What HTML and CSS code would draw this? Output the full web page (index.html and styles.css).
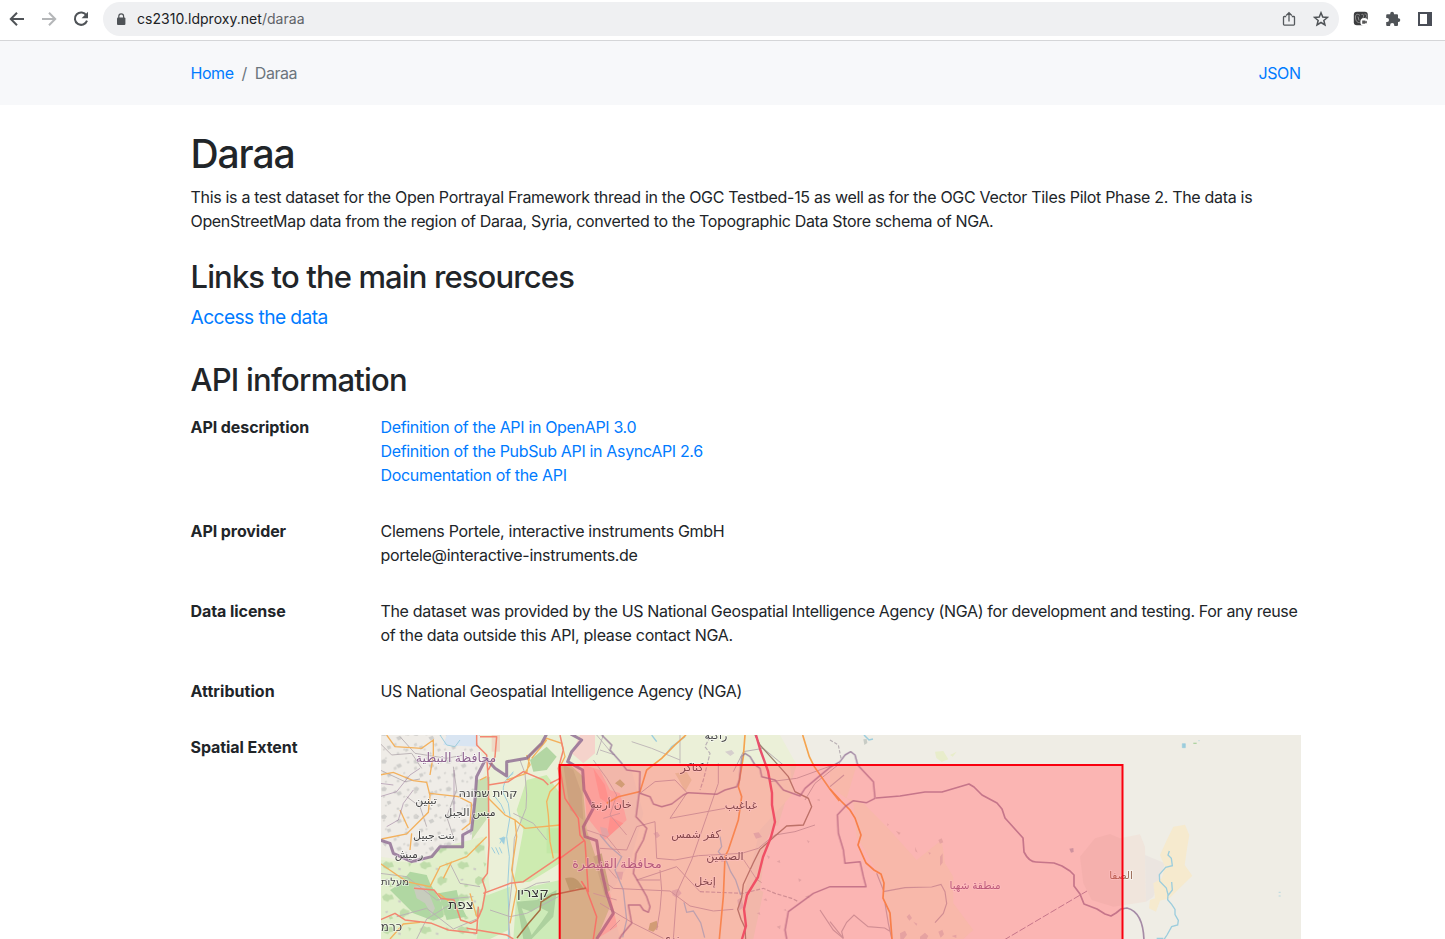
FILE: index.html
```html
<!DOCTYPE html>
<html lang="en">
<head>
<meta charset="utf-8">
<title>Daraa</title>
<link rel="stylesheet" href="styles.css">
</head>
<body>
<div class="toolbar">
  <svg class="icon back" viewBox="0 0 16 16"><path d="M15 8H2M8 1.8 1.8 8 8 14.2" fill="none" stroke="#4f5357" stroke-width="2"/></svg>
  <svg class="icon forward" viewBox="0 0 16 16"><path d="M1 8h13M8 1.8 14.2 8 8 14.2" fill="none" stroke="#b4b6b8" stroke-width="2"/></svg>
  <svg class="icon reload" viewBox="0 0 16 16"><path d="M13.4 4.4A6.2 6.2 0 1 0 14 9.6" fill="none" stroke="#4f5357" stroke-width="2"/><path d="M15 .8v6.4H8.600z" fill="#4f5357"/></svg>
  <div class="omnibox">
    <svg class="lock" viewBox="0 0 10 13"><rect x="1" y="4.600" width="8.400" height="7.400" rx="1" fill="#4f5357"/><path d="M2.800 5V3.300a2.400 2.400 0 0 1 4.800 0V5" fill="none" stroke="#4f5357" stroke-width="1.200"/></svg>
    <span class="url">cs2310.ldproxy.net<span class="path">/daraa</span></span>
    <svg class="icon share" viewBox="0 0 16 16"><path d="M5.200 5.500H3.300q-.8 0-.8.800v7q0 .8.800.8h9.400q.8 0 .8-.8v-7q0-.8-.8-.8h-1.900M8 10.500V2M5.200 4.500 8 1.700l2.800 2.800" fill="none" stroke="#55595d" stroke-width="1.300"/></svg>
    <svg class="icon star" viewBox="0 0 16 16"><path d="m8 1.800 1.750 4.300 4.650.35-3.550 3 1.100 4.500L8 11.500l-3.950 2.450 1.100-4.500-3.550-3 4.650-.35z" fill="none" stroke="#4f5357" stroke-width="1.500"/></svg>
  </div>
  <svg class="icon ext" viewBox="0 0 16 16"><rect x=".8" y=".8" width="14" height="13.400" rx="3" fill="#3c3d3f"/><path d="M7 4.500C5 2.500 2.400 3 2.400 6s1.500 6 4.200 5.500M5 5.500l1 4M8.500 3.500c3-1 2.500 3 .5 4.500m2.500-5c3 0 2.500 2.500 1 4" fill="none" stroke="#999" stroke-width=".9"/><circle cx="11.300" cy="11" r="4" fill="#fff"/><path d="M9.200 9.500h3.200v1l1.400-.7v2.600l-1.400-.7v1H9.200z" fill="#555"/></svg>
  <svg class="icon puzzle" viewBox="0 0 16 16"><path d="M1.200 4.200q0-1 1-1h3V2.700a1.900 1.900 0 0 1 3.800 0v.5h3q1 0 1 1v3h.4a1.900 1.900 0 0 1 0 3.800H13v3q0 1-1 1H9.300v-.8a2.100 2.100 0 0 0-4.200 0v.8H2.200q-1 0-1-1v-2.900H2a2 2 0 0 0 0-4h-.8z" fill="#4f5357"/></svg>
  <svg class="icon panel" viewBox="0 0 16 16"><path d="M1 1h14v14H1zM3 3v10h7V3z" fill="#4a4e57" fill-rule="evenodd"/></svg>
</div>

<nav class="crumbs">
  <div class="trail"><a href="#">Home</a><span class="sep">/</span><span>Daraa</span></div>
  <a href="#" class="json">JSON</a>
</nav>

<main class="content">
  <h1>Daraa</h1>
  <p class="intro"><span class="l1">This is a test dataset for the Open Portrayal Framework thread in the OGC Testbed-15 as well as for the OGC Vector Tiles Pilot Phase 2. The data is</span><br><span class="l2">OpenStreetMap data from the region of Daraa, Syria, converted to the Topographic Data Store schema of NGA.</span></p>
  <h2 class="h-links">Links to the main resources</h2>
  <a href="#" class="access">Access the data</a>
  <h2 class="h-api">API information</h2>
  <dl class="info">
    <dt>API description</dt>
    <dd><a href="#" class="d1">Definition of the API in OpenAPI 3.0</a><br><a href="#" class="d2">Definition of the PubSub API in AsyncAPI 2.6</a><br><a href="#" class="d3">Documentation of the API</a></dd>
    <dt>API provider</dt>
    <dd><span class="p1">Clemens Portele, interactive instruments GmbH</span><br><span class="p2">portele@interactive-instruments.de</span></dd>
    <dt>Data license</dt>
    <dd><span class="c1">The dataset was provided by the US National Geospatial Intelligence Agency (NGA) for development and testing. For any reuse</span><br><span class="c2">of the data outside this API, please contact NGA.</span></dd>
    <dt class="wide">Attribution</dt>
    <dd><span class="a1">US National Geospatial Intelligence Agency (NGA)</span></dd>
    <dt>Spatial Extent</dt>
    <dd>
      <svg class="map" viewBox="381 735 920 204">
        <defs>
          <pattern id="towns" width="97" height="83" patternUnits="userSpaceOnUse"><path d="M4 8l9-4 8 6-5 8-11-1zM48 22l13-5 5 9-11 6zM20 49l10-3 4 8-10 5zM74 58l8-3 4 6-9 5zM80 12l6-2 3 5-6 3zM50 68l5-2 4 6-7 2z" fill="#cfcecb"/></pattern>
          <pattern id="hamlets" width="61" height="71" patternUnits="userSpaceOnUse"><path d="M14 12l5-2 3 5-6 2zM40 42l8-4 3 8-8 4zM8 57l6-2 2 4-6 3z" fill="#d6d4d0"/></pattern>
          <pattern id="woods" width="113" height="97" patternUnits="userSpaceOnUse"><path d="M6 15l12-9 10 4 8-2 6 14-14 3-4 6-13-5zM60 58l10-8 7 4 12 3-3 12-9 3-8 7-10-9zM84 9l10 4-6 10zM25 76l9-3 6 7-10 4z" fill="#bfdcaa"/><path d="M55 25l8 2-2 7-7-3zM15 60l7-3 3 5-7 3z" fill="#cbcbc5"/></pattern>
        </defs>
        <rect x="381" y="735" width="920" height="204" fill="#efede5"/>
        <rect x="560" y="765" width="562" height="174" fill="#f9ede5"/>

        <g transform="translate(380 730) scale(.33333)">
          <path d="M270 15H800L1200 15L1250 104L1190 300L1120 627H0V380L130 400L250 345L320 100z" fill="#ebf0d8"/>
          <path d="M0 15H300L275 340L180 350L110 400L40 380L0 330z" fill="#efece7"/>
          <path d="M0 15H300L275 340L180 350L110 400L40 380L0 330z" fill="url(#towns)"/>
          <path d="M0 15H300L275 340L180 350L110 400L40 380L0 330z" fill="url(#hamlets)"/>
          <path d="M200 15H290V50L190 45z" fill="#d9e5f2"/>
          <path d="M0 390L120 400L190 350L310 320L330 480L290 627H0z" fill="#e1efcb"/>
          <path d="M0 390L120 400L190 350L310 320L330 480L290 627H0z" fill="url(#woods)"/>
          <path d="M30 480L60 462L90 425L140 435L150 460L185 520L190 560L160 572L100 550L70 520zM175 490L230 480L240 520L260 560L200 570z" fill="#b0d7a2"/>
          <path d="M100 470l30-5 15 20 20 50-10 20-20-35-25-15z" fill="#c7cdbd"/>
          <path d="M290 150L330 140L325 260L275 330z" fill="#c9deb1"/>
          <path d="M440 150L500 135L540 190V400L450 455L400 460L430 300L410 240z" fill="#cdebb0"/>
          <path d="M310 500L390 470L385 600L330 627H290zM410 480L540 450V627H400z" fill="#cdebb8"/>
          <path d="M410 515L470 510L530 480L520 560L455 627H430z" fill="#add19e"/>
          <path d="M425 535l30 10 20-15 30 15-20 30-30 40z" fill="#cdebb8"/>
          <path d="M450 90L500 50L530 80L500 120L460 125z" fill="#b3d6a3"/>
          <path d="M540 104L570 104L610 140L610 190L620 300L650 390L690 530L650 627H540z" fill="#c3e0a2"/>
          <path d="M550 104L580 120L605 190L610 270L570 240zM640 380L665 370L690 480L675 500z" fill="#b4cf96"/>
          <path d="M555 445q30-10 45 15l15 20-25-5-20 10z" fill="#9fbf78"/>
          <path d="M600 15H645V70L610 100L575 70z" fill="#f5d3cb"/>
          <path d="M610 104L660 120L690 180L720 190L740 270L675 330L620 260L612 170zM680 480L740 530L710 590L650 627L700 550z" fill="#fbccc0"/>
          <path d="M640 115l35 50 15 60-30-20zM690 260l40 20-50 45z" fill="#ffb4aa"/>
          <path d="M335 15h25v50h-25z" fill="#f2a79b" opacity=".3"/>
          <path d="M500 295h36v75h-36z" fill="#c2e8a6"/>
        </g>

        <g transform="translate(600 730) scale(.33333)">
          <path d="M90 104H570L580 190L480 300L430 500L440 627H60L30 490L90 400L130 250z" fill="#f3f4d8"/>
          <path d="M520 290L590 270L700 340L680 460L570 530L480 480L500 330z" fill="#f9ede5"/>
          <path d="M225 130l35-5 15 25-20 35-15-30z" fill="#e2e2b4"/>
          <path d="M150 580l20-8 5 18-15 15-15-5zM45 160l15-12 15 15-10 10z" fill="#bac786"/>
          <path d="M0 290l20 5 8 20-20 10zM160 310l12-5 8 12-10 8zM215 482l20-6 10 14-15 14-12-8zM50 425h20l-5 25-12-5zM412 510l13-8 6 30-14 10zM360 380l14 2 4 12-14 2zM460 310l16-3 10 14-18 5zM375 65l20-5 8 10-12 8z" fill="#d6cfcd"/>
          <path d="M500 375l10 5-4 8zM530 395l9-5 2 9zM595 445l10 5-8 6zM490 510l8-5 4 8zM470 550l9-3 2 8zM530 590l12-4-2 12zM615 500l11-4 3 9zM650 210l8-4 2 8zM620 330l9 4-4 6zM550 540l7-3 3 7z" fill="#d6cfcd"/>
        </g>
        <g transform="translate(830 730) scale(.33333)">
          <path d="M0 120L80 105L50 205L100 220L170 290L260 390L335 330L345 400L370 440L370 520L430 600L400 627H190L145 430L80 320L70 220L0 170z" fill="#f5f1d7"/>
          <path d="M230 560l8-8 8 12-8 8zM210 610l15-8 6 12-10 13h-10zM270 620l15-12 10 10-5 9h-20zM325 605l12-6 5 14-10 10zM250 575l12 6-3 6zM255 350l8 18-7-4zM198 303l14 5-5 7zM325 330l10-5 5 12-10 4zM330 380l8-10v28l-8 10zM295 366l8 3-5 5zM365 618l14-4v10zM172 280l5 4-5 4z" fill="#d9cfca"/>
          <path d="M100 28l10-1 2 12-9 6z" fill="#c8ccc5"/>
          <path d="M315 65l25-2 15 25-20 8-16-12zM360 75l20-10-12 15z" fill="#e8edcb"/>
        </g>
        <g transform="translate(1060 730) scale(.33333)">
          <path d="M60 380L105 325L150 312L180 325L240 313L255 350L258 515L160 530L95 510L70 460z" fill="#f0e5dc"/>
          <path d="M255 375L315 400L280 500L258 515z" fill="#ebe5e0"/>
          <path d="M340 290L375 284L388 315L382 350L374 405L397 437L328 505L300 512L288 545L267 535L270 510L285 505L280 460L305 445L315 410L300 375L318 335z" fill="#f6eace"/>
          <path d="M28 356l12-2 1 12-8 2z" fill="#b5b6c5"/>
        </g>

        <g fill="none" stroke="#9ccddd" stroke-width="4">
          <g transform="translate(380 730) scale(.33333)">
            <path d="M180 15l20 30 25 5 15-20M400 130q-35 20-30 60l15 30 5 40-10 60 8 60-5 90 4 90-2 70M345 200q20 20 30 50M370 320l-10 20M335 352l10 18M347 352l10 22M358 352l8 18M380 150l20-25" stroke-width="3"/>
            <path d="M358 325l18-4-4 22z" fill="#9ccddd" stroke-width="1"/>
          </g>
          <g transform="translate(600 730) scale(.33333)">
            <path d="M155 15l15 20M200 70l15-20 40-30M360 320l5 30-10 15 25 30 12 30 15 25 15 45M252 517l8 30 20-4 22 35 12 45M0 315l30 35 35 30-20 40 25 60 10 90-12 52"/>
          </g>
          <g transform="translate(1060 730) scale(.33333)"><path d="M328 363l-4 12 10 10 3 22-20 5-19 22 1 20 20 20 5 20-1 15 12 14 10 15v16l10 17-2 14-18 5-14 25-10 15-15 10M335 456l2 24-14 18M290 625h20"/><path d="M367 41h9v12h-9zM415 32h4M656 487h6M656 498h6" fill="#9ccddd" stroke-width="2"/><path d="M400 40h10" stroke="#afd3a3"/></g>
          <path d="M864 735l5 5 4-1" stroke-width="1.500"/>
        </g>

        <g fill="none" stroke="#b9b0b4" stroke-width="3.500">
          <g transform="translate(380 730) scale(.33333)">
            <path d="M0 40l35 35 60-5 30 45M0 120l75 35 45-8M60 20l45 50 95 15 50-10M220 110l10 70-30 80 20 60M80 200l40 30 20 60M440 195l-2 40-35 90-8 140-10 90 5 72M420 90l15 40 5 65M400 250l60 30 40 50M0 430l80 10 90 70 110-10M50 560l90-25 80 62 70-30M110 627l30-60 65-40M210 400l30 60 60 10M330 540l60 20 50-10 95-50M430 480l40-20 40-5" stroke-width="2.800"/>
            <path d="M640 90l40 55 30 50-20 60 50 60M620 300l60 20 40 50M650 15l50 60M670 265l50-15M680 410l30 35M690 600l30-30M640 490l70 20" stroke-width="2.500"/>
          </g>
          <g transform="translate(600 730) scale(.33333)">
            <path d="M120 190l45-35 60-5 38 40M210 265l50-75M210 265l165-30M355 100v60l-35 100-45 130-45 100-10 137M0 355l80 5 30-70 55-15 5 110 55 5 70-13 130-7 50-15 30-25 20-15 60-10 60-20M0 445l40 30 170 8 60 45 70 15 60-5M110 450l120-40 70 75M180 420l5 60-5 60-10 60M110 450l70 0M0 520l100 60 90 45M400 125l30-60 60-10 60 50M510 155l80-10 110-40M615 210l30-50 75-60" stroke-width="3"/>
            <path d="M330 20l-15 30 15 20-20 80-10 30M300 485l130 5 60-15 35 15 50 15 20 10" stroke-dasharray="12 5"/>
            <path d="M465 15l15 30 45 50 40 45 20 45 40 20 10 25-25 55-50 3-35 30-45 40-20 40-30 65-5 40-12 35 10 30 12 25 3 55" stroke="#9a8472" stroke-width="4"/>
            <path d="M430 388l40 60 15 10M10 15l-20 60M240 15v85M0 60l45 15M95 35l60 20 85 35" stroke-width="2.600"/>
            <path d="M660 540l40 60 30 25"/>
          </g>
          <g transform="translate(830 730) scale(.33333)"><path d="M160 485l65-12 80-2 28-8 12 22 5 35-10 30-25 28M0 575l40 50-5-20 15-28 22-22 42 35 50 4 16 10M0 170l42-35M140 430l20 50M165 520l10 60 10 45"/><path d="M0 30l25 15 8 40" stroke-dasharray="10 5"/></g>
        </g>

        <g fill="none" stroke="#f3b15d" stroke-width="4">
          <g transform="translate(380 730) scale(.33333)">
            <path d="M20 15l25 35 80 5 35-25v45l-10 60M0 135l40-8 60 25 40 5 10 40-5 50-65 65-75 15M60 240l25 55M95 310l-5 50M150 190l85 10 40 20M245 300l25-20 5-60M300 150l20-10M0 400l80 55 70 15 30-60 80-30 60-60M175 490l40 30M325 205l50 50 30 15 5 50-15 100 15 60-20 100M405 270l30 25 105-10M540 155l-30 30-10 30 5 40 5 80 10 50M380 150l60-20 10-55 50-50 45 15 10 40-15 30M30 627l40-45 50-5M430 135l20-30-10-30M500 30l-45 55M215 395l-25 50M290 560l-20-70"/>
          </g>
          <g stroke="#f5a44e" stroke-width="5" transform="translate(600 730) scale(.33333)">
            <path d="M258 15l-33 30-40 40-45 35-20 65-65 15-35 20M435 15l-5 65-15 90 10 30-10 70-30 90-10 20-5 120-12 127M608 15l20 65 15 30 45 65 30 38"/>
          </g>
          <path d="M830 789l11 12 9 9 5 8 6 17-3 10 8 18 8 7 7 4 3 9-1 15 7 15 2 26" stroke="#f59a42" stroke-width="1.700"/>
        </g>
        <g fill="none" stroke="#f38670" stroke-width="4.500" stroke-linejoin="round">
          <g transform="translate(380 730) scale(.33333)">
            <path d="M290 15v30l30 30 5 80 2 190-5 85-15 20 10 30-10 55-15 35-20 10-30-10-20-60-40-5-20-25-60-5M300 20h50l-5 60-20 40M325 165l60-10 45-30 60 25 15 15M0 570l45-20 30 20 80 10 50 20 85 10 5-80M540 15l10 45-15 55 5 30-30 15M540 115l15 90 40 60 5 50 15 20 10 150-20-30 15 25 30 80-10 67M540 385l75-55M310 490l80-30 40-5 110-75M260 595l120 20 20 12"/>
          </g>
          <path d="M517 938l11-14 12-14 1-8 11-7 34-7" stroke="#a77043" stroke-width="1.500"/>
          <path d="M756 735l4 14 8 22 4 22 0 12 3 17-4 15-8 20-5 20-11 18-3 14 2 17-4 13-2 20" stroke="#e9516d" stroke-width="2.400"/>
        </g>

        <g fill="none" stroke="#8c6a91" stroke-linejoin="round">
          <g transform="translate(380 730) scale(.33333)">
            <path d="M0 330L30 340L40 370L95 395L155 380L180 350H248V315L275 300L285 210L290 140L318 85L345 115L380 138V95L440 85L485 40L500 12M572 12L605 30L575 65L563 95L608 120L612 180L640 235L610 290L615 320L650 332L660 400L680 490L700 550L650 627" stroke-width="9" opacity=".8"/>
            <path d="M0 200l50-15 40-50 30-20M20 290l35-20 15-50 30-40M222 120v125M0 160l40 5" stroke-width="3" opacity=".5"/>
          </g>
          <g stroke-width="4.500" opacity=".75">
            <g transform="translate(600 730) scale(.33333)">
              <path d="M5 15L35 45L30 60L65 100L80 120L120 125L118 185L108 260L140 295L130 330L108 370L100 430L140 500L150 530L145 547L130 540L120 525H85L95 580L65 615L58 627M120 190L150 200L160 222L185 230L215 222L250 195L265 188L350 193L375 180L410 170L418 150L425 80L435 70L450 80L465 105L480 115L485 140L525 150L550 180L600 198L615 175L650 145L690 112L720 95L735 75L752 65L765 75L773 105L820 155L825 205L800 218L760 212L735 230L712 255L715 310L730 360L735 400L780 395L790 440L798 470L690 470L640 490L565 545L555 600L560 627"/>
            </g>
            <path d="M876 798l24-2 25-4h17l27-8 5 3 8 8 15 8 5 6 3 9 18 20 1 14q5 10 12 10l18 1 8 3 8 5 4 4v11l6 8 4 10 13 5 8 5 6 2 5-3 5-4 6-1q16 4 17 32" stroke-width="1.700"/>
            <path d="M1004 940l83-49" stroke-width="1" stroke-dasharray="7 2"/>
          </g>
        </g>

        <g class="labels">
          <text x="456" y="762" class="region">محافظة النبطية</text>
          <text x="426" y="804">تبنين</text>
          <text x="488" y="797" class="he">קרית שמונה</text>
          <text x="470" y="816">ميس الجبل</text>
          <text x="434" y="839">بنت جبيل</text>
          <text x="409" y="858">رميش</text>
          <text x="395" y="885" class="he small">מעלות</text>
          <text x="461" y="909" class="he big">צפת</text>
          <text x="533" y="897" class="he big">קצרין</text>
          <text x="391.500" y="931" class="he mid">כרמ</text>
          <text x="716" y="739">زاكية</text>
          <text x="692" y="771">كناكر</text>
          <text x="611" y="808">خان أرنبة</text>
          <text x="741" y="809">غباغيب</text>
          <text x="696" y="838">كفر شمس</text>
          <text x="725" y="860">الصنمين</text>
          <text x="705" y="885">إنخل</text>
          <text x="617" y="868" class="region">محافظة القنيطرة</text>
          <text x="975" y="889" class="area">منطقة شهبا</text>
          <text x="1121" y="879" class="safa">الصفا</text>
          <text x="671" y="942">نوى</text>
        </g>
        <rect x="559.700" y="765" width="562.800" height="190" fill="#ff4d56" fill-opacity=".35" stroke="#f9000f" stroke-width="2"/>
      </svg>
    </dd>
  </dl>
</main>
</body>
</html>
```
FILE: styles.css
```css
* { box-sizing: border-box; }
html, body { height: 100%; overflow: hidden; }
body {
  margin: 0;
  background: #fff;
  color: #212529;
  font: 16px/24px Inter, "Liberation Sans", sans-serif;
  letter-spacing: -0.31px;
  white-space: nowrap;
}
a { color: #007bff; text-decoration: none; }

.toolbar {
  display: flex;
  align-items: center;
  height: 41px;
  padding: 0 12px 3px 9px;
  border-bottom: 1px solid #d5d6d8;
}
.icon { width: 16px; height: 16px; flex: none; }
.forward { margin-left: 16px; }
.reload { margin-left: 16px; }
.omnibox {
  display: flex;
  align-items: center;
  width: 1236px;
  height: 34px;
  margin: 1px 14px 0;
  padding: 0 10px 0 13px;
  border-radius: 17px;
  background: #eff0f2;
}
.lock { width: 10px; height: 13px; }
.url { margin-left: 11px; margin-right: auto; font-size: 14px; letter-spacing: 0.03px; color: #202124; }
.path { color: #5f6368; }
.star { margin-left: 16px; }
.puzzle, .panel { margin-left: 16px; }

.crumbs {
  display: flex;
  justify-content: space-between;
  align-items: center;
  height: 64px;
  padding: 0 144.5px 0 190.5px;
  background: #f7f8fa;
  color: #6c757d;
}
.trail { letter-spacing: -0.45px; }
.json { letter-spacing: -0.45px; }
.sep { margin: 0 8px; }

.content { width: 1301px; padding: 24px 0 0 190.5px; }
h1, h2 { margin: 0 0 8px; font-weight: 500; }
h1 { padding-top: 2px; font-size: 39px; line-height: 46px; letter-spacing: -1.1px; }
h2 { font-size: 31px; }
.h-links { padding-top: 2px; line-height: 36.4px; letter-spacing: -0.87px; }
.h-api { line-height: 38.4px; letter-spacing: -0.77px; margin-bottom: 0; }
.intro { margin: 0 0 24px; }
.l2, .d1, .d2, .c1, .a1 { letter-spacing: -0.335px; }
.access { display: block; font-size: 19.2px; line-height: 28.8px; margin-bottom: 29px; letter-spacing: -0.58px; }
.info {
  display: grid;
  grid-template-columns: 190px 920px;
  row-gap: 32px;
  margin: 15px 0 0;
}
dt { font-weight: 700; letter-spacing: -0.07px; }
.wide { letter-spacing: 0.05px; }
dd { margin: 0; }
.map { display: block; width: 920px; height: 204px; }

.labels text {
  font: 11px "Noto Sans", "DejaVu Sans", sans-serif;
  letter-spacing: 0;
  text-anchor: middle;
  fill: #444;
  stroke: rgba(255, 255, 255, .6);
  stroke-width: 1.5px;
  paint-order: stroke;
}
.labels .he { font-size: 11.5px; }
.labels .small { font-size: 10px; }
.labels .mid { font-size: 12px; }
.labels .big { font-size: 13.5px; fill: #333; }
.labels .region { font-size: 12.5px; fill: #8d618f; }
.labels .area { font-size: 10.5px; fill: #9b6390; }
.labels .safa { font-size: 10.5px; fill: #9a6b55; }
```
